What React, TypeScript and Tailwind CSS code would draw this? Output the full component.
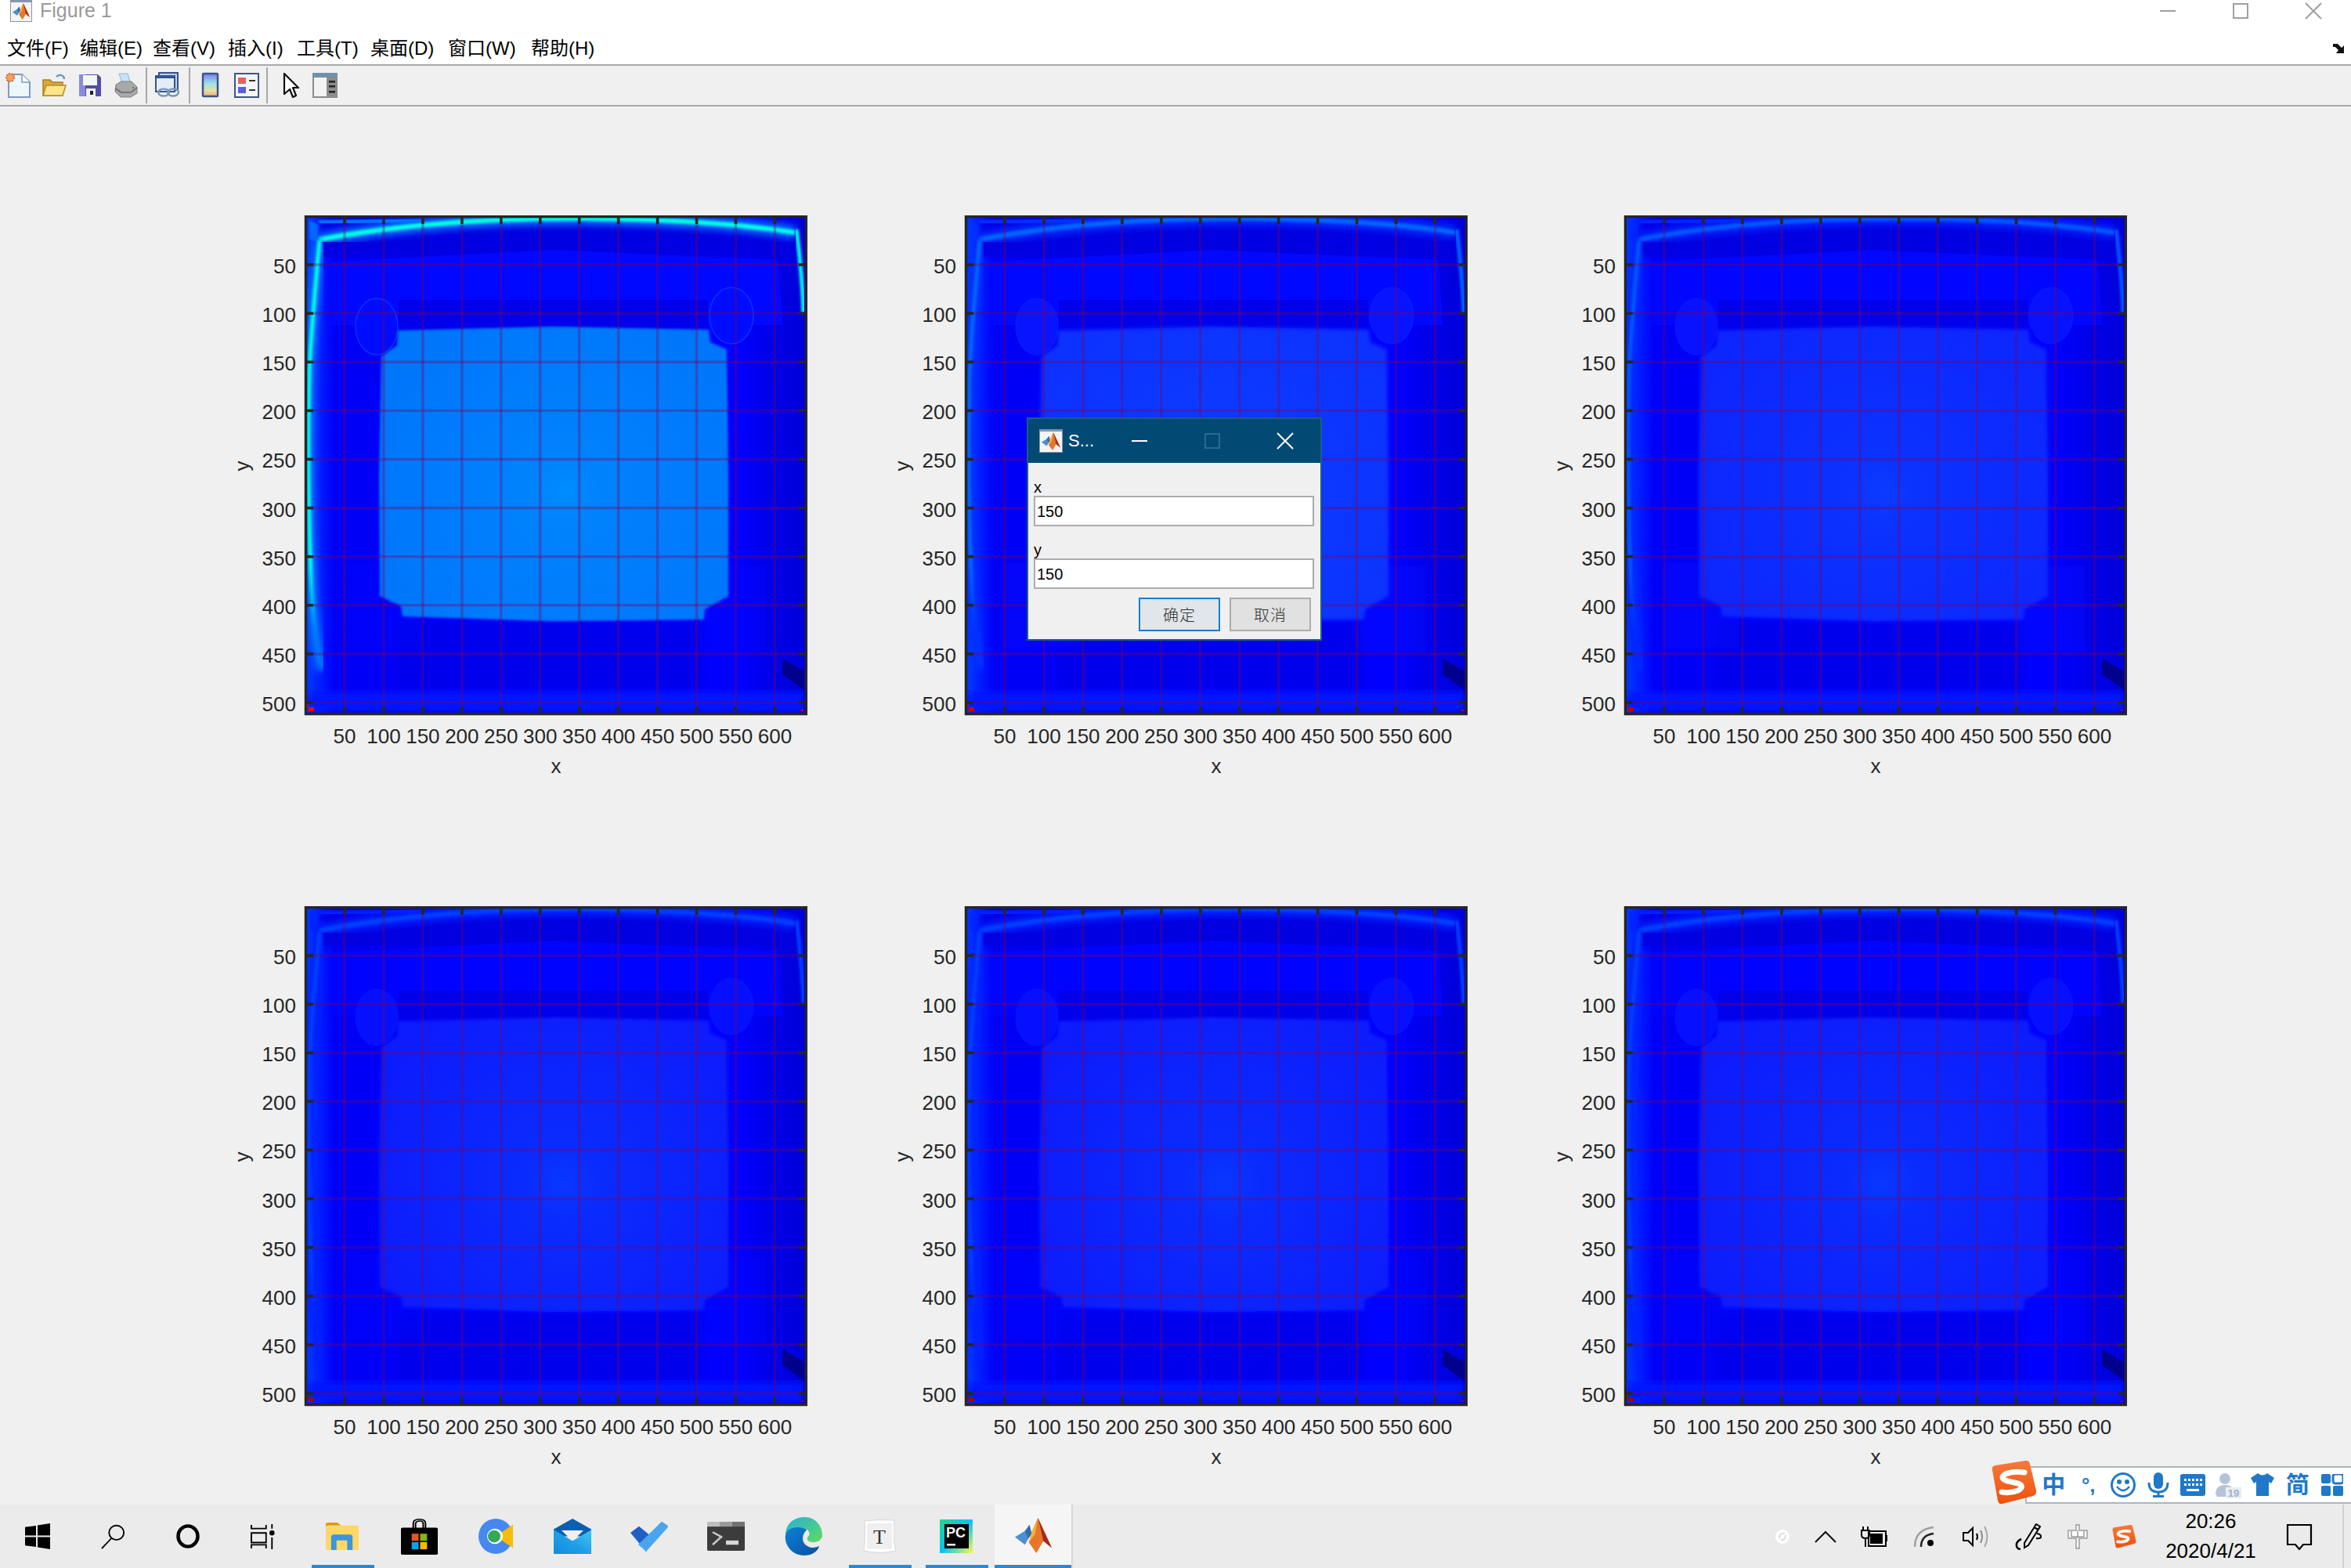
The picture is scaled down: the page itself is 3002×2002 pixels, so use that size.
import React from "react";

const SANS = { fontFamily: '"Liberation Sans", "Noto Sans CJK SC", sans-serif' };

type Tone = { panel: string; glow: string; arc: string; halo: string; ear: string; red: string; lift: string; edge: string };
const bright: Tone = { panel: "#0076fb", glow: "#008cff", arc: "#00ffe6", halo: "#0078ff", ear: "#000cff", red: "#ff0000", lift: "#0008ff", edge: "1.4" };
const mid: Tone = { panel: "#0a30ff", glow: "#0a44ff", arc: "#0068ff", halo: "#0030ff", ear: "#0814ff", red: "#d00000", lift: "#0008ff", edge: "2.5" };
const soft: Tone = { panel: "#0a28ff", glow: "#0a3cff", arc: "#0058ff", halo: "#0028ff", ear: "#0812ff", red: "#c00000", lift: "#0006ff", edge: "2.5" };
const dim: Tone = { panel: "#081efc", glow: "#0838ff", arc: "#0040ff", halo: "#0020ff", ear: "#0610ff", red: "#a80000", lift: "#0004ff", edge: "2.5" };

const XT = [50, 100, 150, 200, 250, 300, 350, 400, 450, 500, 550, 600];
const YT = [50, 100, 150, 200, 250, 300, 350, 400, 450, 500];
const PANEL = "119,147 317,142 516,146 518,162 539,171 541,332 541,486 511,503 510,516 317,518 125,512 123,499 96,486 95,332 98,180 118,166";

function Plot({ id, t }: { id: string; t: Tone }) {
  const W = 642, H = 638;
  const tx = (v: number) => 51 + (v - 50) * 0.999;
  const ty = (v: number) => 63 + (v - 50) * 1.2422;
  return (
    <svg width={762} height={737} viewBox="-120 0 762 737" className="block" style={SANS}>
      <defs>
        <linearGradient id={`base-${id}`} x1="0" x2="1" y1="0" y2="0">
          <stop offset="0" stopColor="#0040ff" />
          <stop offset="0.035" stopColor="#0018ff" />
          <stop offset="0.06" stopColor="#0000f6" />
          <stop offset="0.3" stopColor="#0000f8" />
          <stop offset="0.86" stopColor="#0000ff" />
          <stop offset="0.92" stopColor="#0000ea" />
          <stop offset="1" stopColor="#0000d8" />
        </linearGradient>
        <radialGradient id={`glow-${id}`} gradientUnits="userSpaceOnUse" cx="330" cy="354" r="260">
          <stop offset="0" stopColor={t.glow} />
          <stop offset="0.18" stopColor={t.glow} stopOpacity="0.55" />
          <stop offset="1" stopColor={t.glow} stopOpacity="0" />
        </radialGradient>
        <linearGradient id={`left-${id}`} gradientUnits="userSpaceOnUse" x1="0" x2="0" y1="30" y2="585">
          <stop offset="0" stopColor={t.arc} />
          <stop offset="0.75" stopColor={t.arc} />
          <stop offset="0.9" stopColor={t.halo} />
          <stop offset="1" stopColor={t.halo} stopOpacity="0.2" />
        </linearGradient>
        <filter id={`fg-${id}`} x="-5%" y="-5%" width="110%" height="110%"><feGaussianBlur stdDeviation="0.7" /></filter>
        <filter id={`fs-${id}`} x="-10%" y="-10%" width="120%" height="120%"><feGaussianBlur stdDeviation="1.4" /></filter>
        <filter id={`fe-${id}`} x="-10%" y="-10%" width="120%" height="120%"><feGaussianBlur stdDeviation={t.edge} /></filter>
        <filter id={`fw-${id}`} x="-10%" y="-10%" width="120%" height="120%"><feGaussianBlur stdDeviation="5" /></filter>
        <clipPath id={`clip-${id}`}><rect x="3" y="3" width={W - 6} height={H - 6} /></clipPath>
      </defs>
      <g clipPath={`url(#clip-${id})`}>
        <rect x="0" y="0" width={W} height={H} fill={`url(#base-${id})`} />
        <rect x="20" y="8" width="600" height="45" fill="#0000e0" filter={`url(#fw-${id})`} />
        <polygon points="34,59 317,44 605,57 610,140 34,140" fill={t.lift} />
        <rect x="120" y="108" width="395" height="36" fill="#0000ea" />
        <rect x="120" y="520" width="390" height="84" fill="#0000ec" filter={`url(#fw-${id})`} />
        <rect x="4" y="608" width="634" height="26" fill="#0014ff" filter={`url(#fw-${id})`} />
        <ellipse cx="92" cy="142" rx="27" ry="36" fill={t.ear} stroke={t.halo} strokeWidth="1.5" strokeOpacity="0.4" />
        <ellipse cx="545" cy="128" rx="28" ry="36" fill={t.ear} stroke={t.halo} strokeWidth="1.5" strokeOpacity="0.4" />
        <rect x="49" y="444" width="98" height="108" fill={t.ear} opacity="0.3" filter={`url(#fs-${id})`} />
        <rect x="500" y="448" width="89" height="109" fill={t.ear} opacity="0.3" filter={`url(#fs-${id})`} />
        <polygon points={PANEL} fill={t.panel} filter={`url(#fe-${id})`} />
        <polygon points={PANEL} fill={`url(#glow-${id})`} />
        <path d="M18 31 C120 12 230 5 317 4 C420 3 540 8 626 22" fill="none" stroke={t.halo} strokeWidth="16" filter={`url(#fw-${id})`} />
        <path d="M18 31 C120 12 230 5 317 4 C420 3 540 8 626 22" fill="none" stroke={t.arc} strokeWidth="6" filter={`url(#fs-${id})`} />
        <path d="M18 9 L150 6" fill="none" stroke={t.halo} strokeWidth="6" filter={`url(#fs-${id})`} />
        <path d="M6 6 L6 30 L16 34 L18 12Z" fill={t.halo} opacity="0.8" filter={`url(#fs-${id})`} />
        <path d="M19 32 C14 90 8 150 6 200 C4 280 5 380 8 460 C10 510 15 550 22 580" fill="none" stroke={t.halo} strokeWidth="14" filter={`url(#fw-${id})`} />
        <path d="M19 32 C14 90 8 150 6 200 C4 280 5 380 8 460 C10 510 15 550 22 580" fill="none" stroke={`url(#left-${id})`} strokeWidth="5" filter={`url(#fs-${id})`} />
        <path d="M628 18 C632 50 636 90 637 125" fill="none" stroke={t.arc} strokeWidth="5" filter={`url(#fs-${id})`} />
        <polygon points="610,566 638,582 638,606 610,586" fill="#00008c" />
        <rect x="5" y="628" width="7" height="5" fill={t.red} />
        <rect x="3" y="622" width="1.5" height="7" fill={t.red} />
        <rect x="634" y="631" width="3" height="2" fill={t.red} />
        <g stroke="#7c0a60" strokeOpacity="0.34" strokeWidth="3.5" filter={`url(#fg-${id})`}>
          {XT.map((v) => <line key={v} x1={tx(v)} x2={tx(v)} y1="3" y2={H - 3} />)}
          {YT.map((v) => <line key={v} y1={ty(v)} y2={ty(v)} x1="3" x2={W - 3} />)}
        </g>
      </g>
      <g stroke="#262626" strokeWidth="3.5">
        {XT.map((v) => (
          <g key={v}>
            <line x1={tx(v)} x2={tx(v)} y1="2" y2="11" />
            <line x1={tx(v)} x2={tx(v)} y1={H - 11} y2={H - 2} />
          </g>
        ))}
        {YT.map((v) => (
          <g key={v}>
            <line y1={ty(v)} y2={ty(v)} x1="2" x2="11" />
            <line y1={ty(v)} y2={ty(v)} x1={W - 11} x2={W - 2} />
          </g>
        ))}
      </g>
      <rect x="1.5" y="1.5" width={W - 3} height={H - 3} fill="none" stroke="#262626" strokeWidth="3.5" />
      <g fill="#262626" fontSize="26">
        {XT.map((v) => <text key={v} x={tx(v)} y={H + 36} textAnchor="middle">{v}</text>)}
        {YT.map((v) => <text key={v} x={-11} y={ty(v) + 11} textAnchor="end">{v}</text>)}
        <text x="321" y={H + 74} textAnchor="middle">x</text>
        <text transform="translate(-71,320) rotate(-90)" textAnchor="middle">y</text>
      </g>
    </svg>
  );
}

function Membrane({ size = 48 }: { size?: number }) {
  return (
    <svg width={size} height={size} viewBox="0 0 48 48">
      <polygon points="0,25 13,17 20,23 13,35" fill="#4a90d2" />
      <polygon points="13,17 19,9 22,21 17,27" fill="#2f6ea8" />
      <polygon points="30,0 48,39 37,30 28,46 18,32 22,18" fill="#e8762a" />
      <polygon points="30,0 22,18 18,32 26,22" fill="#f5b13c" />
      <polygon points="30,0 48,39 37,30 33,12" fill="#a52a1a" />
    </svg>
  );
}

function FramedLogo({ size }: { size: number }) {
  return (
    <div className="flex flex-col items-center justify-center bg-[#f4f4f4] border border-[#8a94a0] overflow-hidden" style={{ width: size, height: size }}>
      <div className="w-full h-[2px] bg-[#7d9ab5]" />
      <div className="flex-1 flex items-center justify-center"><Membrane size={size - 6} /></div>
    </div>
  );
}

function WinBtn({ kind, color = "#a0a0a0" }: { kind: "min" | "max" | "close"; color?: string }) {
  return (
    <svg width="22" height="22" viewBox="0 0 22 22" fill="none" stroke={color} strokeWidth="2">
      {kind === "min" && <line x1="1" x2="21" y1="11" y2="11" />}
      {kind === "max" && <rect x="2" y="2" width="18" height="18" />}
      {kind === "close" && <path d="M1 1 L21 21 M21 1 L1 21" />}
    </svg>
  );
}

const MENUS = [
  { t: "文件(F)", w: "w-[93px]" },
  { t: "编辑(E)", w: "w-[93px]" },
  { t: "查看(V)", w: "w-[96px]" },
  { t: "插入(I)", w: "w-[88px]" },
  { t: "工具(T)", w: "w-[94px]" },
  { t: "桌面(D)", w: "w-[99px]" },
  { t: "窗口(W)", w: "w-[106px]" },
  { t: "帮助(H)", w: "w-[90px]" },
];

function Tb({ children, w = "w-[46px]" }: { children: React.ReactNode; w?: string }) {
  return <div className={`${w} h-[34px] flex items-center justify-center shrink-0`}>{children}</div>;
}

const TOOL = {
  New: (
    <svg width="34" height="34" viewBox="0 0 34 34">
      <path d="M5 3 H22 L32 13 V32 H5Z" fill="#eef6fd" stroke="#7b9cc0" strokeWidth="2" />
      <path d="M22 3 V13 H32" fill="#fff" stroke="#7b9cc0" strokeWidth="1.5" />
      <circle cx="7" cy="7" r="5" fill="#f6a15c" stroke="#e0602a" strokeWidth="2" strokeDasharray="2 1.5" />
    </svg>
  ),
  Open: (
    <svg width="34" height="34" viewBox="0 0 34 34">
      <path d="M20 6 C24 2 30 4 30 9" fill="none" stroke="#6f9ac0" strokeWidth="2.5" />
      <path d="M3 10 H12 L15 13 H28 V30 H3Z" fill="#d9a93c" stroke="#a87e22" strokeWidth="1.5" />
      <path d="M3 30 L7 17 H32 L28 30Z" fill="#fce58a" stroke="#b58c28" strokeWidth="1.5" />
    </svg>
  ),
  Save: (
    <svg width="32" height="32" viewBox="0 0 32 32">
      <path d="M2 2 H26 L30 6 V30 H2Z" fill="#5050a8" />
      <path d="M2 2 H10 V30 H2Z" fill="#8a8ad8" />
      <rect x="7" y="3" width="18" height="13" fill="#f2f6fb" />
      <rect x="11" y="20" width="12" height="10" fill="#f2f2f2" />
      <rect x="16" y="23" width="4" height="5" fill="#222" />
    </svg>
  ),
  Print: (
    <svg width="32" height="32" viewBox="0 0 32 32">
      <path d="M7 1 H18 L22 14 H11Z" fill="#c6e2f4" stroke="#9bb4c6" />
      <path d="M3 15 L10 11 H23 L30 18 V26 L22 31 H9 L2 24Z" fill="#a8a8a8" stroke="#808080" />
      <path d="M2 20 L10 25 H22 L30 19" fill="none" stroke="#666" strokeWidth="1.5" />
      <circle cx="25" cy="19" r="1.2" fill="#3a9a3a" />
    </svg>
  ),
  Link: (
    <svg width="34" height="34" viewBox="0 0 34 34">
      <rect x="5" y="1" width="24" height="22" fill="#c0d0e4" stroke="#34548c" strokeWidth="2" />
      <rect x="1" y="5" width="24" height="20" fill="#e4ecf6" stroke="#34548c" strokeWidth="2" />
      <rect x="1" y="5" width="24" height="3" fill="#34548c" />
      <ellipse cx="11" cy="26" rx="7" ry="4.5" fill="none" stroke="#7c98b8" strokeWidth="2.5" />
      <ellipse cx="23" cy="26" rx="7" ry="4.5" fill="none" stroke="#7c98b8" strokeWidth="2.5" />
    </svg>
  ),
  Bar: (
    <svg width="24" height="34" viewBox="0 0 24 34">
      <defs>
        <linearGradient id="cbar" x1="0" x2="0" y1="0" y2="1">
          <stop offset="0" stopColor="#7c7cf0" />
          <stop offset="0.45" stopColor="#9ee4e8" />
          <stop offset="0.75" stopColor="#e8e0a0" />
          <stop offset="1" stopColor="#f0a878" />
        </linearGradient>
      </defs>
      <rect x="2" y="2" width="19" height="29" rx="1" fill="url(#cbar)" stroke="#3c5488" strokeWidth="2.5" />
    </svg>
  ),
  Legend: (
    <svg width="32" height="32" viewBox="0 0 32 32">
      <rect x="1" y="1" width="30" height="30" fill="#f4f6fa" stroke="#3c5488" strokeWidth="2" />
      <rect x="5" y="6" width="10" height="8" fill="#e86060" />
      <rect x="5" y="18" width="10" height="8" fill="#5c5ce4" />
      <rect x="19" y="9" width="8" height="2" fill="#333" />
      <rect x="19" y="21" width="8" height="2" fill="#333" />
    </svg>
  ),
  Arrow: (
    <svg width="22" height="32" viewBox="0 0 22 32">
      <path d="M2 1 L20 19 H13 L17 29 L13 31 L9 21 L2 27Z" fill="#fff" stroke="#111" strokeWidth="2.2" strokeLinejoin="round" />
    </svg>
  ),
  Panel: (
    <svg width="32" height="32" viewBox="0 0 32 32">
      <rect x="0" y="0" width="32" height="32" fill="#8c8c8c" />
      <rect x="2" y="6" width="16" height="24" fill="#f2f4f4" />
      <rect x="0" y="0" width="32" height="5" fill="#6c92ae" />
      <rect x="21" y="10" width="8" height="2.5" fill="#222" />
      <rect x="21" y="16" width="8" height="2.5" fill="#222" />
      <rect x="21" y="23" width="8" height="2.5" fill="#222" />
    </svg>
  ),
};

const TASK_L = [
  <svg key="w" width="32" height="33" viewBox="0 0 32 34" preserveAspectRatio="none"><path d="M0 5 L14 3 V16 H0Z M16 2.6 L32 0 V16 H16Z M0 18 H14 V31 L0 29Z M16 18 H32 V34 L16 31.4Z" fill="#000" /></svg>,
  <svg key="s" width="32" height="33" viewBox="0 0 34 36" fill="none" stroke="#000" strokeWidth="2" preserveAspectRatio="none"><circle cx="22" cy="13" r="10" /><path d="M15 21 L2 35" /></svg>,
  <svg key="c" width="32" height="33" viewBox="0 0 32 34" fill="none" stroke="#000" strokeWidth="4.5" preserveAspectRatio="none"><ellipse cx="16" cy="17" rx="12.5" ry="13.5" /></svg>,
  <svg key="t" width="32" height="32" viewBox="0 0 34 34" fill="none" stroke="#000" strokeWidth="2" preserveAspectRatio="none"><path d="M1 1 V6 H21 V1 M1 12 H21 V25 H1Z M1 33 V28 H21 V33 M29 0 V6 M29 18 V34" /><circle cx="29" cy="12" r="2.5" fill="#000" /></svg>,
];

const TASK_R = [
  { line: true, icon: (
    <svg width="43" height="35" viewBox="0 0 44 46" preserveAspectRatio="none"><path d="M0 3 Q0 0 3 0 H15 L20 5 H4 V12 H0Z" fill="#dc9a08" /><rect x="0" y="5" width="43" height="41" rx="2" fill="#ffd766" /><path d="M7 46 V24 Q7 20 11 20 H31 Q35 20 35 24 V46 H28 V30 H14 V46Z" fill="#3a96dd" /></svg>
  ) },
  { icon: (
    <svg width="47" height="46" viewBox="0 0 48 60" preserveAspectRatio="none"><path d="M16 16 V8 Q16 1 24 1 Q32 1 32 8 V16 M19 16 V9 Q19 4 25 4 Q29 4 29 9 V16" fill="none" stroke="#000" strokeWidth="2" /><rect x="0" y="15" width="48" height="45" rx="2" fill="#000" /><rect x="14" y="25" width="9" height="12" fill="#f25022" /><rect x="25" y="25" width="9" height="12" fill="#7fba00" /><rect x="14" y="39" width="9" height="12" fill="#00a4ef" /><rect x="25" y="39" width="9" height="12" fill="#ffb900" /></svg>
  ) },
  { icon: (
    <svg width="44" height="45" viewBox="0 0 44 60" preserveAspectRatio="none"><ellipse cx="22" cy="30" rx="22" ry="30" fill="#4688f1" /><path d="M22 30 L44 10 V50Z" fill="#fbbc05" /><ellipse cx="21" cy="30" rx="10" ry="13" fill="#fff" /><ellipse cx="20" cy="30" rx="8" ry="10.5" fill="#34a853" /></svg>
  ) },
  { icon: (
    <svg width="48" height="45" viewBox="0 0 48 60" preserveAspectRatio="none"><defs><linearGradient id="mail-g" x1="0" x2="1" y1="1" y2="0"><stop offset="0" stopColor="#0a78d4" /><stop offset="1" stopColor="#40c8f8" /></linearGradient></defs><path d="M0 18 L24 0 L48 18 V30 H0Z" fill="#0a5fb0" /><path d="M10 20 H38 L24 38Z" fill="#f0f0f0" /><path d="M0 19 L24 38 L48 19 V60 H0Z" fill="url(#mail-g)" /><path d="M0 60 L0 19 L24 38 L48 60Z" fill="#1aa0e8" opacity="0.45" /></svg>
  ) },
  { icon: (
    <svg width="48" height="39" viewBox="0 0 48 52" preserveAspectRatio="none"><path d="M0 20 L11 9 L30 30 L20 52Z" fill="#1f5fc4" /><path d="M20 52 L10 40 L40 1 L48 8 Q48 10 47 12Z" fill="#4aa5ee" /></svg>
  ) },
  { icon: (
    <svg width="48" height="37" viewBox="0 0 48 48" preserveAspectRatio="none"><rect width="48" height="48" rx="2" fill="#3c3c3c" /><rect width="16" height="8" fill="#bdbdbd" /><rect x="16" width="16" height="8" fill="#9a9a9a" /><rect x="32" width="16" height="8" fill="#727272" /><path d="M7 17 L18 25 L7 38" fill="none" stroke="#c8c8c8" strokeWidth="3" /><rect x="24" y="31" width="16" height="7" fill="#d8d8d8" /></svg>
  ) },
  { icon: (
    <svg width="49" height="49" viewBox="0 0 50 64" preserveAspectRatio="none"><defs><linearGradient id="edge-a" x1="0" x2="1" y1="0" y2="1"><stop offset="0" stopColor="#28b0d8" /><stop offset="1" stopColor="#5fdc60" /></linearGradient><linearGradient id="edge-b" x1="0" x2="1" y1="0" y2="1"><stop offset="0" stopColor="#0a82d8" /><stop offset="1" stopColor="#0c4f9a" /></linearGradient></defs><path d="M2 30 C2 10 14 0 27 0 C42 0 50 16 50 30 C50 38 44 42 38 42 C32 42 29 38 31 33 C36 28 32 17 22 18 C12 19 2 24 2 30Z" fill="url(#edge-a)" /><path d="M2 30 C0 48 12 64 26 64 C36 64 44 58 46 48 C38 54 28 50 25 40 C23 30 28 24 30 21 C22 14 4 16 2 30Z" fill="url(#edge-b)" /></svg>
  ) },
  { line: true, icon: (
    <svg width="44" height="47" viewBox="0 0 44 47"><path d="M3 4 Q22 1 41 3 Q38 24 43 42 Q22 47 2 42 Q5 24 3 4Z" fill="#fafafa" stroke="#d8d8d8" /><rect x="5" y="6" width="34" height="35" fill="#efefef" stroke="#fff" strokeWidth="2" /><text x="22" y="33" textAnchor="middle" fontSize="26" fill="#333" fontFamily="Liberation Serif, serif">T</text></svg>
  ) },
  { line: true, icon: (
    <svg width="42" height="43" viewBox="0 0 42 43"><defs><linearGradient id="pycharm-g" x1="0" x2="1" y1="0" y2="1"><stop offset="0" stopColor="#21d789" /><stop offset="0.5" stopColor="#07c3f2" /><stop offset="1" stopColor="#fcf84a" /></linearGradient></defs><rect width="42" height="43" fill="url(#pycharm-g)" /><rect x="6" y="6" width="31" height="31" fill="#000" /><text x="8" y="23" fontSize="18" fontWeight="700" fill="#fff" fontFamily="Liberation Sans, sans-serif">PC</text><rect x="9" y="31" width="11" height="2.5" fill="#fff" /></svg>
  ) },
];

const IME = [
  <span key="a" className="text-[30px] leading-none font-bold text-[#1f78c8]">中</span>,
  <span key="b" className="text-[26px] leading-none font-bold text-[#1f78c8]">°,</span>,
  <svg key="c" width="34" height="34" viewBox="0 0 34 34" fill="none" stroke="#1f78c8" strokeWidth="3"><circle cx="17" cy="17" r="14.5" /><path d="M9 19 Q17 29 25 19" strokeWidth="2.5" /><circle cx="12" cy="13" r="1.5" fill="#1f78c8" /><circle cx="22" cy="13" r="1.5" fill="#1f78c8" /></svg>,
  <svg key="d" width="30" height="34" viewBox="0 0 30 34" fill="#1f78c8"><rect x="9" y="1" width="12" height="21" rx="6" /><path d="M3 14 Q3 26 15 26 Q27 26 27 14" fill="none" stroke="#1f78c8" strokeWidth="3" /><rect x="13.5" y="26" width="3" height="5" /><rect x="8" y="30" width="14" height="3" /></svg>,
  <svg key="e" width="32" height="28" viewBox="0 0 32 28"><rect width="32" height="28" rx="3" fill="#1f78c8" /><g fill="#fff"><rect x="5" y="6" width="3" height="3" /><rect x="10" y="6" width="3" height="3" /><rect x="15" y="6" width="3" height="3" /><rect x="20" y="6" width="3" height="3" /><rect x="25" y="6" width="3" height="3" /><rect x="5" y="12" width="3" height="3" /><rect x="10" y="12" width="3" height="3" /><rect x="15" y="12" width="3" height="3" /><rect x="20" y="12" width="3" height="3" /><rect x="25" y="12" width="3" height="3" /><rect x="8" y="19" width="16" height="3" /></g></svg>,
  <svg key="f" width="34" height="34" viewBox="0 0 34 34"><circle cx="13" cy="9" r="7" fill="#b4c4d8" /><path d="M1 28 Q2 17 13 17 Q20 17 22 21 V32 H3Z" fill="#b4c4d8" /><rect x="14" y="20" width="20" height="14" fill="#e8edf3" /><text x="24" y="32" fontSize="13" fontWeight="700" textAnchor="middle" fill="#a0b0c4" fontFamily="Liberation Sans, sans-serif">19</text></svg>,
  <svg key="g" width="30" height="30" viewBox="0 0 30 30" fill="#1f78c8"><path d="M9 0 Q15 5 21 0 L30 6 L26 13 L23 11 V29 H7 V11 L4 13 L0 6Z" /></svg>,
  <span key="h" className="text-[30px] leading-none font-bold text-[#1f78c8]">简</span>,
  <svg key="i" width="28" height="28" viewBox="0 0 28 28" fill="#1f78c8"><rect width="12" height="12" rx="2" /><rect x="15" width="13" height="12" rx="3" fill="none" stroke="#1f78c8" strokeWidth="3" /><rect y="15" width="12" height="13" rx="2" /><rect x="15" y="15" width="13" height="13" rx="2" /></svg>,
];

function SogouLogo({ w, h }: { w: number; h: number }) {
  return (
    <svg width={w} height={h} viewBox="0 0 60 56">
      <defs><linearGradient id={`sogou-${w}`} x1="0" x2="0" y1="0" y2="1"><stop offset="0" stopColor="#f47a3c" /><stop offset="1" stopColor="#f0500c" /></linearGradient></defs>
      <path d="M3 12 Q2 7 7 6 L45 0 Q50 -1 51 4 L59 38 Q60 43 55 45 L16 55 Q11 56 10 51Z" fill={`url(#sogou-${w})`} />
      <path d="M44 15 Q30 13 20 17 Q11 22 22 26 L36 29 Q45 33 36 38 Q26 42 15 40" fill="none" stroke="#fff" strokeWidth="7" strokeLinecap="round" />
    </svg>
  );
}

export default function App() {
  return (
    <div className="relative w-[3002px] h-[2002px] flex flex-col bg-[#f0f0f0] overflow-hidden" style={SANS}>
      <div className="h-[28px] bg-white flex items-center shrink-0 overflow-hidden">
        <div className="ml-[13px]"><FramedLogo size={28} /></div>
        <span className="ml-[10px] pb-[2px] text-[25px] leading-none text-[#9a9a9a]">Figure 1</span>
        <div className="ml-auto flex items-center h-full pr-[37px] gap-[71px]">
          <WinBtn kind="min" />
          <WinBtn kind="max" />
          <WinBtn kind="close" />
        </div>
      </div>
      <div className="h-[56px] bg-white flex items-center pl-[9px] pt-[14px] border-b-2 border-[#a8a8a8] shrink-0">
        {MENUS.map((m) => <span key={m.t} className={`${m.w} text-[24px] leading-none text-black whitespace-nowrap`}>{m.t}</span>)}
        <svg className="ml-auto mr-[8px]" width="16" height="14" viewBox="0 0 16 14"><path d="M1 1 H7 L12 6 L15 3 V13 H5 L8 9 L4 5 H1Z" fill="#111" /></svg>
      </div>
      <div className="h-[52px] flex items-center border-b-2 border-[#a8a8a8] shrink-0 bg-[#f0f0f0]">
        <Tb>{TOOL.New}</Tb>
        <Tb>{TOOL.Open}</Tb>
        <Tb>{TOOL.Save}</Tb>
        <Tb>{TOOL.Print}</Tb>
        <div className="w-[2px] h-[46px] bg-[#a8a8a8] ml-[2px] mr-[4px]" />
        <Tb>{TOOL.Link}</Tb>
        <div className="w-[2px] h-[46px] bg-[#a8a8a8] ml-[3px] mr-[3px]" />
        <Tb>{TOOL.Bar}</Tb>
        <Tb>{TOOL.Legend}</Tb>
        <div className="w-[2px] h-[46px] bg-[#a8a8a8] ml-[2px] mr-[7px]" />
        <Tb>{TOOL.Arrow}</Tb>
        <Tb w="w-[40px]">{TOOL.Panel}</Tb>
      </div>
      <div className="flex-1 pt-[139px] pl-[269px]">
        <div className="grid grid-cols-[repeat(3,762px)] gap-x-[80.5px] gap-y-[145px]">
          <Plot id="a" t={bright} />
          <Plot id="b" t={mid} />
          <Plot id="c" t={soft} />
          <Plot id="d" t={dim} />
          <Plot id="e" t={dim} />
          <Plot id="f" t={dim} />
        </div>
      </div>
      <div className="h-[81px] bg-[#ebebeb] flex shrink-0">
        {TASK_L.map((ic, i) => <div key={i} className="w-[96px] h-full flex items-center justify-center">{ic}</div>)}
        <div className="w-[4px]" />
        {TASK_R.map((it, i) => (
          <div key={i} className="relative w-[98px] h-full flex items-center justify-center">
            {it.icon}
            {it.line && <div className="absolute bottom-0 left-[10px] right-[8px] h-[4px] bg-[#2b88d0]" />}
          </div>
        ))}
        <div className="relative w-[98px] h-full flex items-center justify-center bg-[#f5f5f5]">
          <Membrane size={47} />
          <div className="absolute bottom-0 left-0 right-0 h-[4px] bg-[#2b88d0]" />
        </div>
        <div className="w-[2px] h-full bg-[#d8d8d8]" />
        <div className="flex-1" />
        <div className="flex h-full items-center shrink-0">
          <div className="w-[52px] flex justify-center">
            <svg width="20" height="20" viewBox="0 0 20 20"><circle cx="10" cy="10" r="9" fill="#fff" /><path d="M6 12 Q6 5 13 6 M14 8 Q14 15 8 14" fill="none" stroke="#dcdcdc" strokeWidth="2" /></svg>
          </div>
          <div className="w-[58px] flex justify-center">
            <svg width="28" height="16" viewBox="0 0 28 16" fill="none" stroke="#111" strokeWidth="2"><path d="M1 15 L14 2 L27 15" /></svg>
          </div>
          <div className="w-[65px] flex justify-center">
            <svg width="34" height="28" viewBox="0 0 34 28" fill="none" stroke="#000" strokeWidth="2"><path d="M3 1 V6 M9 1 V6 M1 6 H11 V12 Q11 16 6 16 Q1 16 1 12Z M6 16 V27" /><rect x="10" y="7" width="22" height="19" /><rect x="12" y="10" width="16" height="13" fill="#000" stroke="none" /><rect x="32" y="12" width="2" height="8" fill="#000" stroke="none" /></svg>
          </div>
          <div className="w-[64px] flex justify-center">
            <svg width="26" height="26" viewBox="0 0 26 26" fill="none"><path d="M1 26 Q1 4 25 1" stroke="#a0a0a0" strokeWidth="2.5" /><path d="M9 26 Q9 11 25 9" stroke="#222" strokeWidth="2.5" /><circle cx="21" cy="21" r="4" fill="#000" /></svg>
          </div>
          <div className="w-[67px] flex justify-center">
            <svg width="34" height="30" viewBox="0 0 34 30" fill="none"><path d="M1 10 H7 L13 4 V26 L7 20 H1Z" stroke="#000" strokeWidth="2" /><path d="M18 11 Q20 15 18 19" stroke="#000" strokeWidth="2" /><path d="M23 7 Q27 15 23 23" stroke="#8a8a8a" strokeWidth="2" /><path d="M28 2 Q35 15 28 28" stroke="#a8a8a8" strokeWidth="2" /></svg>
          </div>
          <div className="w-[67px] flex justify-center">
            <svg width="34" height="34" viewBox="0 0 34 34" fill="none" stroke="#000" strokeWidth="2"><path d="M27 1 L32 4 L17 28 L12 31 L12 25Z M24 5 L30 8" /><path d="M8 20 Q1 23 2 29 Q3 33 7 33" strokeWidth="2.5" /><path d="M28 13 Q34 14 33 18 Q31 20 27 19" /></svg>
          </div>
          <div className="w-[60px] flex justify-center">
            <svg width="26" height="32" viewBox="0 0 26 32" fill="#fff" stroke="#9a9a9a" strokeWidth="1.5"><path d="M11 1 H15 V8 H25 V18 H15 V31 H11 V18 H1 V8 H11Z" /><path d="M5 9 V16 H21 V9 M13 8 V18" fill="none" /></svg>
          </div>
          <div className="w-[58px] flex justify-center"><SogouLogo w={32} h={30} /></div>
          <div className="w-[164px] h-full flex flex-col items-center justify-center gap-[13px] text-[26px] leading-[25px] text-black">
            <span>20:26</span>
            <span>2020/4/21</span>
          </div>
          <div className="w-[62px] flex justify-center">
            <svg width="34" height="34" viewBox="0 0 34 34" fill="none" stroke="#000" strokeWidth="2.2"><path d="M2 2 H32 V27 H22 L17 33 L12 27 H2Z" /></svg>
          </div>
          <div className="w-[35px] h-full flex justify-end pr-[9px]"><div className="w-[2px] h-full bg-[#d0d0d0]" /></div>
        </div>
      </div>

      <div className="absolute left-[2586px] top-[1872px] w-[416px] h-[48px] bg-white border-y-2 border-l-2 border-[#aab4c0] flex items-center pl-[12px]">
        {IME.map((ic, i) => <div key={i} className="w-[44.5px] flex justify-center shrink-0">{ic}</div>)}
      </div>
      <div className="absolute left-[2541px] top-[1865px]"><SogouLogo w={60} h={56} /></div>

      <div className="absolute left-[1311px] top-[533px] w-[377px] h-[285px] bg-[#f0f0f0] border-2 border-[#1a5e85] flex flex-col">
        <div className="h-[56px] bg-[#024a74] flex items-center shrink-0 pl-[14px]">
          <FramedLogo size={30} />
          <span className="ml-[7px] text-[22px] leading-none text-white">S...</span>
          <div className="ml-[47px]"><WinBtn kind="min" color="#ffffff" /></div>
          <div className="ml-[71px]"><WinBtn kind="max" color="#2a6a90" /></div>
          <div className="ml-[71px]"><WinBtn kind="close" color="#ffffff" /></div>
        </div>
        <div className="flex flex-col px-[7px] pt-[20px] text-[20px] leading-none text-black">
          <span className="h-[22px] leading-[22px]">x</span>
          <div className="w-[358px] h-[39px] bg-white border-2 border-[#acacac] flex items-center pl-[2px]">150</div>
          <span className="mt-[19px] h-[22px] leading-[22px]">y</span>
          <div className="w-[358px] h-[39px] bg-white border-2 border-[#acacac] flex items-center pl-[2px]">150</div>
          <div className="mt-[11px] flex justify-end gap-[12px] pr-[5px]">
            <div className="w-[104px] h-[43px] bg-[#e1e6ea] border-2 border-[#0f7fd6] flex items-center justify-center text-[20px] tracking-[1px] text-[#333] font-light" style={{ fontFamily: '"Noto Sans CJK SC", sans-serif' }}>确定</div>
            <div className="w-[104px] h-[43px] bg-[#e1e1e1] border-2 border-[#adadad] flex items-center justify-center text-[20px] tracking-[1px] text-[#333] font-light" style={{ fontFamily: '"Noto Sans CJK SC", sans-serif' }}>取消</div>
          </div>
        </div>
      </div>
    </div>
  );
}
